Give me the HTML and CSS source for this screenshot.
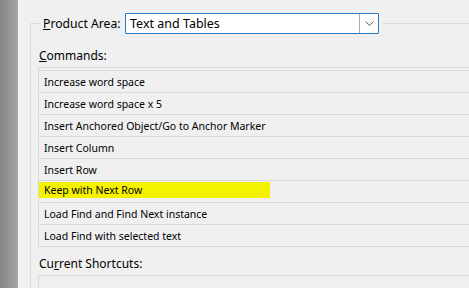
FILE: index.html
```html
<!DOCTYPE html>
<html lang="en">
<head>
  <meta charset="UTF-8">
  <title>Keyboard Shortcuts</title>
  <link rel="stylesheet" href="styles.css">
</head>
<body>
  <!-- window behind the dialog -->
  <div class="edge"></div>

  <!-- Dialog -->
  <div class="dialog">
    <fieldset class="group">
      <legend class="area">
        <label for="productArea"><u>P</u>roduct Area:</label>
        <div class="combo" id="productArea">
          <span class="combo-text">Text and Tables</span>
          <span class="combo-btn">
            <svg width="9" height="5" viewBox="0 0 9 5"><path d="M0.5 0.5 L4.5 4.3 L8.5 0.5" fill="none" stroke="#555" stroke-width="1"/></svg>
          </span>
        </div>
      </legend>

      <div class="caption first"><u>C</u>ommands:</div>
      <ul class="cmd-list">
        <li>Increase word space</li>
        <li>Increase word space x 5</li>
        <li>Insert Anchored Object/Go to Anchor Marker</li>
        <li>Insert Column</li>
        <li>Insert Row</li>
        <li class="marked"><span class="mark">Keep with Next Row</span></li>
        <li>Load Find and Find Next instance</li>
        <li>Load Find with selected text</li>
      </ul>

      <div class="caption last">Cu<u>r</u>rent Shortcuts:</div>
      <div class="shortcut-box"></div>
    </fieldset>
  </div>
</body>
</html>
```

FILE: styles.css
```css
/* Global */
body {
  margin: 0;
  height: 100vh;
  display: flex;
  overflow: hidden;
  background-color: #f0f0f0;
  font-family: 'Noto Sans', 'Liberation Sans', sans-serif;
  color: #000;
}

/* Dark strip of the window behind */
.edge {
  width: 18px;
  background: linear-gradient(to right, #868686, #a4a4a4);
  border-right: 1px solid #fafafa;
}

.dialog {
  flex: 1;
  padding: 13px 0 0 11px;
  overflow: hidden;
}

/* Group box */
.group {
  box-sizing: border-box;
  margin: 0;
  padding: 0 0 0 7px;
  height: 100%;
  border: 1px solid #dcdcdc;
  border-right: none;
  border-bottom: none;
}

.area {
  display: flex;
  align-items: center;
  gap: 6px;
  margin-left: 3px;
  padding: 0 3px 0 2px;
  font-size: 12.2px;
}

.area label {
  width: 76px;
  white-space: nowrap;
}

.combo {
  display: flex;
  width: 252px;
  height: 19px;
  background-color: #fff;
  border: 1px solid #2b78c6;
  border-radius: 1px;
}

.combo-text {
  flex: 1;
  padding-left: 4px;
  line-height: 19px;
  font-size: 12.5px;
}

.combo-btn {
  width: 18px;
  display: flex;
  align-items: center;
  justify-content: center;
  border-left: 1px solid #a8a8a8;
}

.caption {
  font-size: 12px;
  height: 20px;
  line-height: 20px;
  margin-left: 1px;
}

.caption.first {
  margin-top: 12px;
  margin-bottom: 1px;
}

.caption.last {
  height: 22px;
  line-height: 22px;
  margin-top: 6px;
}

/* Commands list */
.cmd-list {
  list-style-type: none;
  margin: 0;
  padding: 2px 0 0 0;
  height: 176px;
  overflow: hidden;
  border: 1px solid #d9d9d9;
  border-right: none;
  font-size: 10.5px;
}

.cmd-list li {
  height: 21px;
  line-height: 22px;
  padding-left: 5px;
  border-top: 1px solid #dadada;
  white-space: nowrap;
}

.mark {
  display: block;
  width: 226px;
  height: 16px;
  line-height: 17px;
  margin: 1px 0 0 -6px;
  padding-left: 6px;
  background-color: #f5f200;
}

.shortcut-box {
  height: 40px;
  border: 1px solid #dadada;
  border-right: none;
}
```
